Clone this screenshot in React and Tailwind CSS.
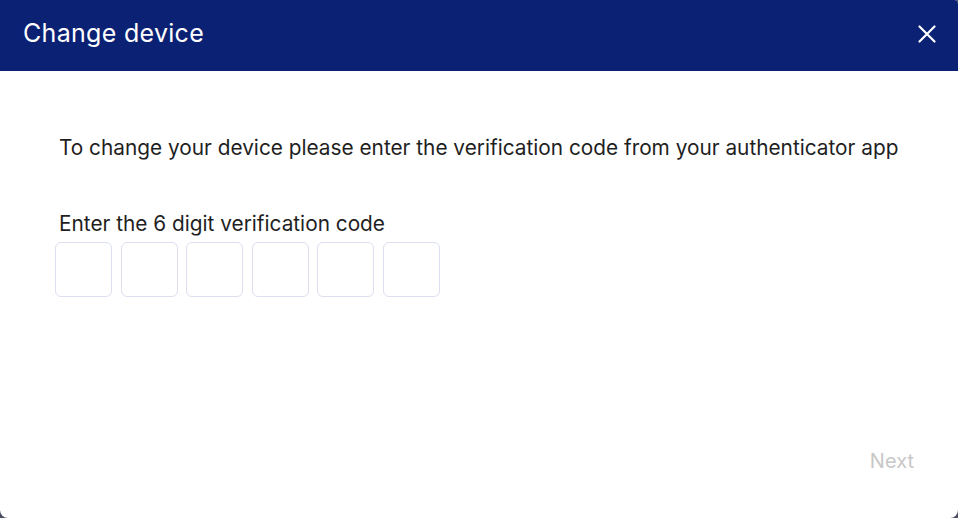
export default function App() {
  const digits = [0, 1, 2, 3, 4, 5];

  return (
    <div className="h-[518px] w-[958px] bg-[#4b4e63] font-['Inter',sans-serif]">
      <div className="flex h-full flex-col overflow-hidden rounded-tr-[4px] rounded-b-[8px] bg-white">
        {/* Header */}
        <header className="flex h-[71px] shrink-0 items-center justify-between bg-[#0b2174] pb-[3px] pl-[23px] pr-[19px]">
          <h1 className="text-[25px] font-normal tracking-[0.3px] text-white">Change device</h1>
          <button className="flex h-[24px] w-[24px] items-center justify-center text-white">
            <svg width="18" height="18" viewBox="0 0 18 18" fill="none" stroke="currentColor" strokeWidth="2.2" strokeLinecap="round">
              <path d="M1.5 1.5l15 15M16.5 1.5l-15 15" />
            </svg>
          </button>
        </header>

        {/* Body */}
        <main className="flex flex-1 flex-col px-[55px]">
          <p className="mt-[62px] pl-[4px] text-[20.8px] leading-[30px] text-[#1f1f1f]">
            To change your device please enter the verification code from your authenticator app
          </p>
          <label className="mt-[46px] pl-[4px] text-[20.8px] leading-[30px] text-[#1f1f1f]">
            Enter the 6 digit verification code
          </label>
          <div className="mt-[3px] flex gap-[8.6px]">
            {digits.map((d) => (
              <input
                key={d}
                maxLength={1}
                className="h-[55px] w-[57px] rounded-[6px] border border-[#dcdff0] text-center text-[22px] outline-none"
              />
            ))}
          </div>
        </main>

        {/* Footer */}
        <footer className="flex justify-end pb-[42px] pr-[44px]">
          <button className="text-[20px] text-[#c8c8c8]">Next</button>
        </footer>
      </div>
    </div>
  );
}
